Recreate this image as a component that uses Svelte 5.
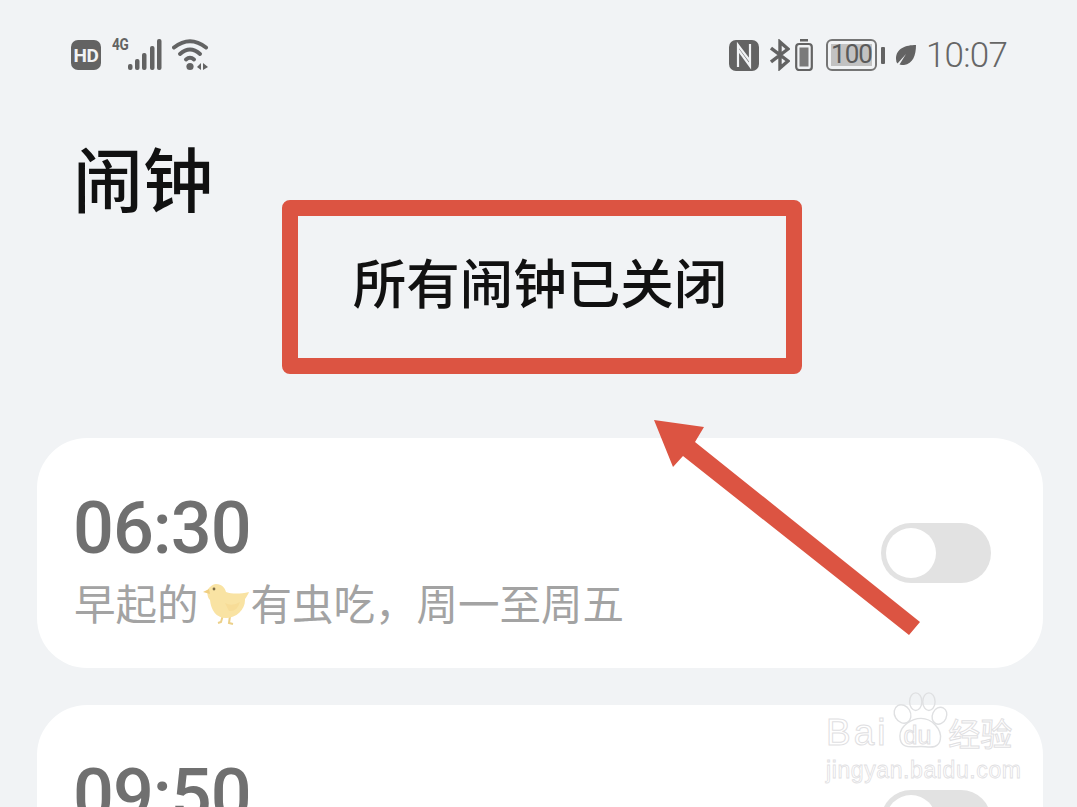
<script>
  const alarms = [
    { time: '06:30', before: '早起的', after: '有虫吃\uFF0C周一至周五', chick: true },
    { time: '09:50', before: '', after: '', chick: false }
  ];
  const bars = [
    { x: 15, y: 26 },
    { x: 22, y: 21 },
    { x: 29, y: 15 },
    { x: 37, y: 8 },
    { x: 44, y: 1 }
  ];
</script>

<div class="page">
  <header class="status">
    <div class="group left">
      <span class="hd">HD</span>
      <svg class="signal" width="50" height="34" viewBox="0 0 50 34">
        {#each bars as b}
          <rect x={b.x} y={b.y} width="4.500" height={32 - b.y} rx="2" fill="#636363"/>
        {/each}
      </svg>
      <span class="g4">4G</span>
      <svg class="wifi" width="38" height="34" viewBox="0 0 38 34">
        <g fill="none" stroke="#636363" stroke-width="4" stroke-linecap="round">
          <path d="M2 9.500 Q18 -3 34 9.500"/>
          <path d="M8 16 Q18 7 28 16"/>
          <path d="M14 21.500 Q18 18 22 21.500"/>
        </g>
        <circle cx="18" cy="28.500" r="3.600" fill="#636363"/>
        <path d="M29 25 L29 32 L25 29 Z M31 25 L31 32 L36 29 Z" fill="#636363"/>
      </svg>
    </div>
    <div class="group right">
      <svg class="nfc" width="30" height="31" viewBox="0 0 30 31">
        <rect width="30" height="31" rx="7" fill="#636363"/>
        <path d="M9 27 V5 L21 21 M21 4 V26 L9 9.500" stroke="#f1f3f5" stroke-width="2.200" fill="none"/>
      </svg>
      <svg class="bt" width="20" height="32" viewBox="0 0 20 32">
        <path d="M1 9 L18 22 L10 29 V3 L18 10 L1 23" fill="none" stroke="#636363" stroke-width="3.400"/>
      </svg>
      <svg class="cell" width="18" height="32" viewBox="0 0 18 32">
        <rect x="5" y="0" width="8" height="2.500" fill="#636363"/>
        <rect x="1.200" y="5" width="15.600" height="26" rx="3" fill="none" stroke="#636363" stroke-width="2.200"/>
        <rect x="4.500" y="8.500" width="9" height="19" fill="#7a7a7a"/>
      </svg>
      <span class="battery"><span class="level">100</span></span>
      <span class="nub"></span>
      <svg class="leaf" width="22" height="22" viewBox="0 0 22 22">
        <path d="M21 1 C11 1 1 4 1 15 Q1 18 2.500 19.500 L11 10 L4.500 20.500 Q7 21 9 21 C18 20 21 11 21 1 Z" fill="#636363"/>
      </svg>
      <span class="clock">10:07</span>
    </div>
  </header>

  <h1>闹钟</h1>
  <div class="notice"><span>所有闹钟已关闭</span></div>

  <main class="list">
    {#each alarms as alarm}
      <section class="card">
        <div class="info">
          <div class="time">{alarm.time}</div>
          <div class="desc">
            <span>{alarm.before}</span>
            {#if alarm.chick}
              <svg class="chick" width="46" height="42" viewBox="0 0 46 42">
                <path d="M20 32 L18 39 L15 40 M27 33 L26 40 L30 41" stroke="#ecd089" stroke-width="2" fill="none"/>
                <path d="M13 1 C19 1 22 5 23 9 C29 11 37 11 46 9 C44 14 42 15 42 17 C42 27 33 35 23 35 C13 35 8 27 7 17 C4 14 3 7 7 4 C9 2 11 1 13 1 Z" fill="#f9e3a3"/>
                <path d="M6 6 L0 9 L7 11 Z" fill="#f0cf82"/>
                <path d="M22 20 Q29 24 37 19 Q34 29 26 28 Z" fill="#f7dc97"/>
                <circle cx="11" cy="6" r="1.400" fill="#7a6a45"/>
              </svg>
            {/if}
            <span>{alarm.after}</span>
          </div>
        </div>
        <div class="toggle"><span class="knob"></span></div>
      </section>
    {/each}
  </main>

  <svg class="arrow" width="270" height="220" viewBox="0 0 270 220">
    <path d="M2 1 L52 8 L43 23 L268 203 L257 216 L31 37 L21 48 Z" fill="#dc5442"/>
  </svg>

  <div class="mark">
    <svg class="paw" width="60" height="58" viewBox="0 0 68 66">
      <g fill="none" stroke="#dfe0e2" stroke-width="1.600">
        <ellipse cx="13" cy="25" rx="9" ry="11" transform="rotate(-30 13 25)"/>
        <ellipse cx="28" cy="11" rx="7" ry="10"/>
        <ellipse cx="43" cy="11" rx="7" ry="10"/>
        <ellipse cx="55" cy="27" rx="8" ry="10" transform="rotate(25 55 27)"/>
        <path d="M10 50 C10 38 24 30 34 30 C46 30 58 42 56 54 C54 66 42 62 34 62 C24 62 10 66 10 50 Z"/>
      </g>
    </svg>
    <div class="brand"><span class="bai">Bai</span><span class="du">du</span><span class="jy">经验</span></div>
    <div class="url">jingyan.baidu.com</div>
  </div>
</div>

<style>
  :global(body) {
    margin: 0;
    background: #f1f3f5;
  }
  .page {
    position: relative;
    width: 1077px;
    height: 807px;
    overflow: hidden;
    background: #f1f3f5;
    font-family: "Noto Sans CJK SC", "Noto Sans", sans-serif;
  }
  .status {
    display: flex;
    justify-content: space-between;
    align-items: center;
    height: 34px;
    padding: 38px 70px 0 71px;
  }
  .group {
    display: flex;
    align-items: center;
  }
  .left {
    position: relative;
  }
  .hd {
    display: flex;
    align-items: center;
    justify-content: center;
    width: 30px;
    height: 30px;
    border-radius: 7px;
    background: #636363;
    color: #f1f3f5;
    font: 700 19px/1 "Roboto", sans-serif;
    letter-spacing: -0.5px;
  }
  .signal {
    margin-left: 12px;
  }
  .g4 {
    position: absolute;
    left: 41px;
    top: -1px;
    color: #636363;
    font: 700 16px/1 "Roboto", sans-serif;
    letter-spacing: -0.5px;
    transform: scaleX(0.85);
    transform-origin: left;
  }
  .wifi {
    margin-left: 9px;
  }
  .bt {
    margin-left: 11px;
  }
  .cell {
    margin-left: 5px;
  }
  .battery {
    display: flex;
    box-sizing: border-box;
    width: 51px;
    height: 32px;
    margin-left: 13px;
    padding: 3px;
    border: 2.500px solid #757575;
    border-radius: 6px;
  }
  .level {
    flex: 1;
    background: #c2c2c2;
    color: #5a5a5a;
    font: 400 26px/21px "Roboto", sans-serif;
    text-align: center;
    letter-spacing: -1px;
  }
  .nub {
    width: 4px;
    height: 17px;
    margin-left: 4px;
    background: #636363;
    border-radius: 1px;
  }
  .leaf {
    margin-left: 10px;
  }
  .clock {
    margin-left: 9px;
    color: #666;
    font: 300 35px/1 "Roboto", sans-serif;
    letter-spacing: -0.8px;
  }
  h1 {
    margin: 0;
    padding: 65px 0 0 73px;
    height: 80px;
    color: #111;
    font-size: 70px;
    font-weight: 500;
    line-height: 80px;
  }
  .notice {
    position: absolute;
    left: 282px;
    top: 200px;
    box-sizing: border-box;
    width: 520px;
    height: 174px;
    display: flex;
    align-items: center;
    justify-content: center;
    border: 16px solid #dc5442;
    border-radius: 8px;
    color: #111;
    font-size: 53.500px;
    font-weight: 500;
  }
  .notice span {
    position: relative;
    top: -7px;
    left: -2px;
  }
  .list {
    display: flex;
    flex-direction: column;
    gap: 37px;
    margin-top: 221px;
    padding: 0 34px 0 37px;
  }
  .card {
    flex: none;
    box-sizing: border-box;
    height: 230px;
    display: flex;
    align-items: center;
    justify-content: space-between;
    padding: 0 52px 0 37px;
    border-radius: 50px;
    background: #fff;
  }
  .info {
    padding-top: 9px;
  }
  .time {
    color: #707070;
    font: 500 72px/80px "Roboto", sans-serif;
    letter-spacing: -1px;
    margin-left: -1px;
  }
  .desc {
    display: flex;
    align-items: center;
    height: 50px;
    margin-top: 8px;
    color: #a3a3a3;
    font-size: 41.500px;
    line-height: 50px;
    white-space: pre;
  }
  .chick {
    margin: 4px 2px 0 4px;
  }
  .toggle {
    display: flex;
    align-items: center;
    box-sizing: border-box;
    width: 110px;
    height: 60px;
    padding: 0 5px;
    border-radius: 30px;
    background: #e2e2e2;
  }
  .knob {
    width: 50px;
    height: 50px;
    border-radius: 50%;
    background: #fff;
  }
  .arrow {
    position: absolute;
    left: 652px;
    top: 419px;
  }
  .mark {
    position: absolute;
    left: 826px;
    top: 690px;
    width: 195px;
    color: rgba(255, 255, 255, 0.6);
  }
  .paw {
    position: absolute;
    left: 65px;
    top: 2px;
  }
  .brand {
    position: relative;
    display: flex;
    align-items: flex-end;
    height: 64px;
    font-family: "Liberation Sans", sans-serif;
    -webkit-text-stroke: 1px #dfe0e2;
  }
  .bai {
    font-size: 37px;
    line-height: 42px;
    letter-spacing: 3px;
  }
  .du {
    margin-left: 15px;
    font-size: 25px;
    line-height: 38px;
  }
  .jy {
    margin-left: 17px;
    font-size: 32px;
    line-height: 44px;
    font-family: "Noto Sans CJK SC", sans-serif;
  }
  .url {
    margin-top: 2px;
    font: 400 23px/28px "Liberation Sans", sans-serif;
    letter-spacing: 0.6px;
    -webkit-text-stroke: 0.8px #dfe0e2;
  }
</style>
